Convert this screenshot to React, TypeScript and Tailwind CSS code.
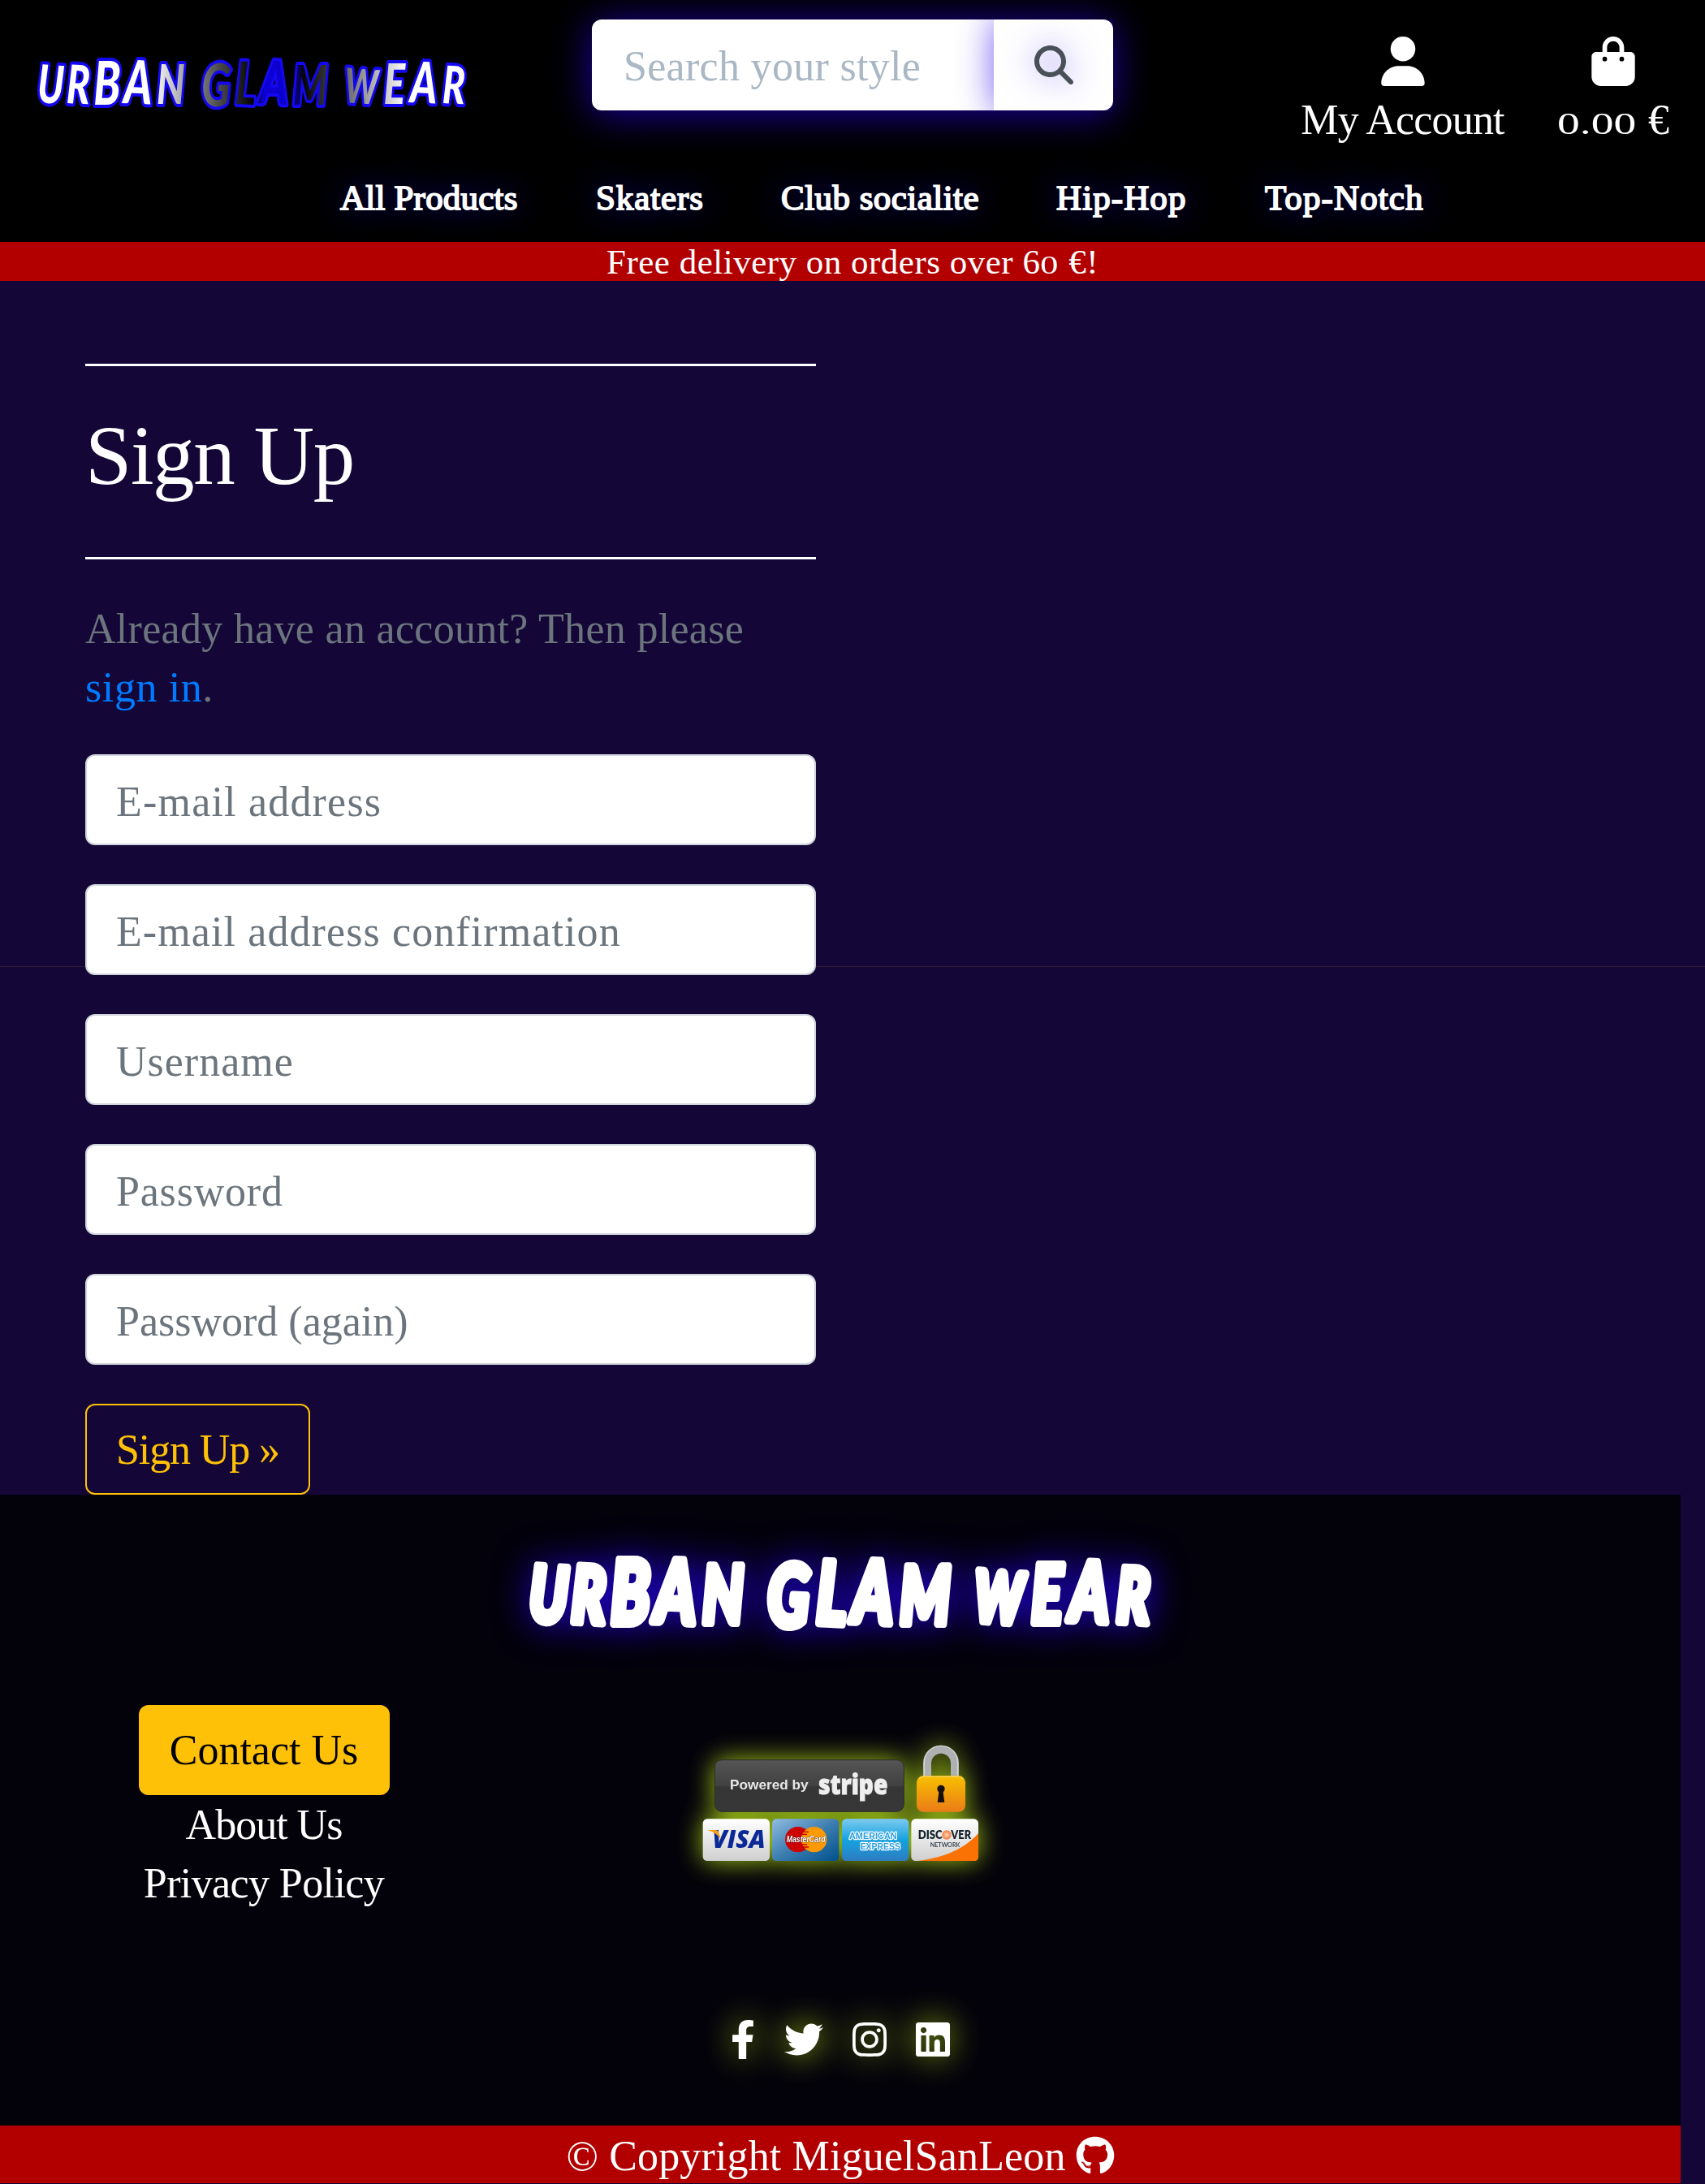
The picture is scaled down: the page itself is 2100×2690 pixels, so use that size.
import React from "react";
import { FaUser, FaBagShopping, FaMagnifyingGlass } from "react-icons/fa6";
import { FaFacebookF, FaTwitter, FaInstagram, FaLinkedin, FaGithub } from "react-icons/fa";

const NAV = [
  { label: "All Products", cls: "w-[219px] tracking-[0.2px]" },
  { label: "Skaters", cls: "w-[132px] tracking-[0.9px]" },
  { label: "Club socialite", cls: "w-[243px] tracking-[0.45px]" },
  { label: "Hip-Hop", cls: "w-[161px] tracking-[1.1px]" },
  { label: "Top-Notch", cls: "w-[196px] tracking-[1.1px]" },
];

const FIELDS = [
  { label: "E-mail address", cls: "tracking-[1.2px]" },
  { label: "E-mail address confirmation", cls: "tracking-[1.1px]" },
  { label: "Username", cls: "tracking-[1px]" },
  { label: "Password", cls: "tracking-[0.8px]" },
  { label: "Password (again)", cls: "tracking-[0px]" },
];

// Each glyph: character, left edge, baseline, size and tilt.
const GLYPHS: [string, number, number, number, number][] = [
  ["U", 2, 56, 65, 3],
  ["R", 52, 57, 66, 2],
  ["B", 99, 59, 75, 0],
  ["A", 150, 57, 74, 2],
  ["N", 207, 58, 67, 0],
  [" ", 262, 57, 20, 0],
  ["G", 283, 60, 73, 2],
  ["L", 341, 58, 73, 2],
  ["A", 383, 57, 73, 2],
  ["M", 440, 59, 67, 0],
  [" ", 508, 57, 20, 0],
  ["W", 527, 56, 59, 3],
  ["E", 595, 58, 69, 0],
  ["A", 640, 56, 70, 2],
  ["R", 695, 57, 64, 2],
];

function Wordmark({ className, outlined }: { className: string; outlined?: boolean }) {
  return (
    <svg viewBox="0 0 533 67" className={className} preserveAspectRatio="none">
      <defs>
        <linearGradient id="chrome" gradientUnits="userSpaceOnUse" x1="0" y1="0" x2="740" y2="0">
          <stop offset="0.27" stopColor="#ffffff" />
          <stop offset="0.34" stopColor="#a8a8a8" />
          <stop offset="0.43" stopColor="#444444" />
          <stop offset="0.5" stopColor="#050505" />
          <stop offset="0.53" stopColor="#0c00d8" />
          <stop offset="0.59" stopColor="#0c00c8" />
          <stop offset="0.62" stopColor="#050505" />
          <stop offset="0.69" stopColor="#444444" />
          <stop offset="0.76" stopColor="#9a9a9a" />
          <stop offset="0.86" stopColor="#ffffff" />
        </linearGradient>
      </defs>
      <text
        transform="scale(0.72 1)"
        fontFamily="Lato, sans-serif"
        fontWeight="900"
        fontStyle="italic"
        fill={outlined ? "url(#chrome)" : "#ffffff"}
        stroke={outlined ? "#1408f0" : "#ffffff"}
        strokeWidth={outlined ? 8 : 7}
        strokeLinejoin="round"
        paintOrder="stroke"
      >
        {GLYPHS.map(([ch, x, y, size, tilt], i) => (
          <tspan key={i} x={x} y={y} fontSize={size} rotate={tilt}>
            {ch}
          </tspan>
        ))}
      </text>
    </svg>
  );
}

function PaymentBadge() {
  return (
    <svg viewBox="0 0 1170 600" className="h-[200px] w-[390px] overflow-visible [filter:drop-shadow(0_0_16px_#a4c916)]">
      <defs>
        <linearGradient id="plate" x1="0" y1="0" x2="0" y2="1">
          <stop offset="0" stopColor="#555" />
          <stop offset="0.5" stopColor="#414141" />
          <stop offset="0.52" stopColor="#353535" />
          <stop offset="1" stopColor="#373737" />
        </linearGradient>
        <linearGradient id="card" x1="0" y1="0" x2="0" y2="1">
          <stop offset="0" stopColor="#fff" />
          <stop offset="1" stopColor="#cfcfcf" />
        </linearGradient>
        <linearGradient id="mc" x1="0" y1="0" x2="1" y2="1">
          <stop offset="0" stopColor="#90bce0" />
          <stop offset="0.5" stopColor="#3d7eb0" />
          <stop offset="1" stopColor="#00508c" />
        </linearGradient>
        <linearGradient id="amex" x1="0" y1="0" x2="0" y2="1">
          <stop offset="0" stopColor="#7dcaf0" />
          <stop offset="0.5" stopColor="#15a2e0" />
          <stop offset="1" stopColor="#2d7cc0" />
        </linearGradient>
        <linearGradient id="lock" x1="0" y1="0" x2="0" y2="1">
          <stop offset="0" stopColor="#f8c000" />
          <stop offset="1" stopColor="#ea7c18" />
        </linearGradient>
        <radialGradient id="orb">
          <stop offset="0" stopColor="#ffd9bd" />
          <stop offset="1" stopColor="#f47a3c" />
        </radialGradient>
      </defs>
      <rect x="121" y="143" width="699" height="191" rx="26" fill="url(#plate)" stroke="#2e2e2e" strokeWidth="3" />
      <text x="177" y="253" textLength="290" lengthAdjust="spacingAndGlyphs" fontFamily="Liberation Sans, sans-serif" fontWeight="700" fontSize="50" fill="#e8e8e8">Powered by</text>
      <text x="504" y="270" textLength="256" lengthAdjust="spacingAndGlyphs" fontFamily="Open Sans, sans-serif" fontWeight="800" fontSize="100" fill="#efefef" stroke="#efefef" strokeWidth="3">stripe</text>
      <path d="M906 210V155a51 51 0 0 1 102 0v55" fill="none" stroke="#aeb0b2" strokeWidth="30" />
      <path d="M895 205V153a62 62 0 0 1 124 0v52" fill="none" stroke="#d4d5d6" strokeWidth="4" />
      <rect x="867" y="202" width="180" height="133" rx="24" fill="url(#lock)" />
      <path d="M876 214q5-9 17-9h128q12 0 17 9" fill="none" stroke="#ffdf70" strokeWidth="3" />
      <circle cx="957" cy="250" r="14" fill="#15100c" />
      <path d="M950 255h14l6 45h-26z" fill="#15100c" />
      <rect x="77" y="361" width="247" height="155" rx="16" fill="url(#card)" />
      <rect x="333" y="361" width="247" height="155" rx="16" fill="url(#mc)" />
      <rect x="591" y="361" width="247" height="155" rx="16" fill="url(#amex)" />
      <rect x="847" y="361" width="248" height="155" rx="16" fill="url(#card)" />
      <path d="M870 516C970 505 1045 470 1095 414V500q0 16-16 16z" fill="#fb7204" />
      <text x="112" y="467" textLength="196" lengthAdjust="spacingAndGlyphs" fontFamily="Open Sans, sans-serif" fontWeight="800" fontStyle="italic" fontSize="88" fill="#0a2896">VISA</text>
      <path d="M93 402h30q10 0 13 10l8 24q-18-26-51-34z" fill="#f5a01c" />
      <circle cx="428" cy="437" r="47" fill="#cc0000" />
      <circle cx="488" cy="437" r="47" fill="#ff9900" />
      <path d="M444 409h24M442 418h20M442 456h20M444 465h24" stroke="#cc0000" strokeWidth="4" />
      <text x="386" y="448" textLength="144" lengthAdjust="spacingAndGlyphs" fontFamily="Liberation Sans, sans-serif" fontWeight="700" fontStyle="italic" fontSize="33" fill="#fff" stroke="#223" strokeWidth="2" paintOrder="stroke">MasterCard</text>
      <g fontFamily="Liberation Sans, sans-serif" fontWeight="700" fontSize="34" fill="#2b9fe0" stroke="#fff" strokeWidth="7" strokeLinejoin="round" paintOrder="stroke">
        <text x="618" y="435" textLength="176" lengthAdjust="spacingAndGlyphs">AMERICAN</text>
        <text x="659" y="473" textLength="148" lengthAdjust="spacingAndGlyphs">EXPRESS</text>
      </g>
      <text x="872" y="436" textLength="90" lengthAdjust="spacingAndGlyphs" fontFamily="Lato, sans-serif" fontWeight="800" fontSize="46" fill="#16222c">DISC</text>
      <circle cx="978" cy="420" r="17" fill="url(#orb)" />
      <text x="994" y="436" textLength="74" lengthAdjust="spacingAndGlyphs" fontFamily="Lato, sans-serif" fontWeight="800" fontSize="46" fill="#16222c">VER</text>
      <text x="917" y="465" textLength="110" lengthAdjust="spacingAndGlyphs" fontFamily="Lato, sans-serif" fontWeight="500" fontSize="25" fill="#16222c">NETWORK</text>
    </svg>
  );
}

function Header() {
  return (
    <header className="h-[298px] overflow-hidden bg-black">
      <div className="flex h-[184px] items-start">
        <Wordmark outlined className="mt-[70px] ml-[44px] h-[67px] w-[533px] shrink-0 overflow-visible" />
        <form className="mt-6 ml-[152px] flex h-[112px] w-[642px] shrink-0 rounded-[12px] shadow-[0_4px_48px_#2600d8c0]">
          <input
            className="w-[495px] rounded-l-[12px] border-2 border-white bg-white pt-1 pl-[37px] text-[52px] tracking-[0.3px] placeholder:text-[#aab7c4] placeholder:opacity-100"
            placeholder="Search your style"
          />
          <button type="button" className="flex flex-1 items-center justify-center rounded-r-[12px] border-2 border-white bg-white text-[#495057] shadow-[0_0_44px_#2600e8a0] [clip-path:inset(0_0_0_-60px)]">
            <FaMagnifyingGlass className="size-12 [filter:drop-shadow(0_0_20px_#2600e890)]" />
          </button>
        </form>
        <div className="ml-[229px] flex w-[255px] shrink-0 flex-col items-center pt-[45px] text-white">
          <FaUser className="h-[61px] w-[54px]" />
          <span className="mt-[6px] text-[52px] leading-[72px] tracking-[-0.8px] whitespace-nowrap">My Account</span>
        </div>
        <div className="ml-[62px] flex w-[140px] shrink-0 flex-col items-center pt-[45px] text-white">
          <FaBagShopping className="h-[61px] w-[54px]" />
          <div className="mt-[6px] flex h-[72px] w-[138px] items-baseline justify-between text-[52px] leading-[72px]">
            <span className="w-[96px] origin-left scale-x-[1.5] text-[37px]">0.00</span>
            <span>€</span>
          </div>
        </div>
      </div>
      <nav className="mt-[30px] ml-[419px] flex gap-24">
        {NAV.map((n) => (
          <a key={n.label} className={`${n.cls} text-[43px] leading-[60px] whitespace-nowrap text-white [-webkit-text-stroke:1.8px_white] [text-shadow:0_0_40px_#2600d8]`}>
            {n.label}
          </a>
        ))}
      </nav>
    </header>
  );
}

export default function App() {
  return (
    <div className="relative isolate h-[2690px] w-[2100px] overflow-hidden bg-[#140738] [font-family:'Liberation_Serif',serif]">
      <div className="absolute top-[1190px] left-0 -z-10 h-px w-full bg-[#35193a]" />
      <Header />
      <div className="h-[48px] bg-[#b20000] text-center text-[43px] leading-[50px] tracking-[0.5px] text-white">
        Free delivery on orders over 6
        <span className="mr-[8px] inline-block origin-left scale-x-[1.45] text-[31px] leading-none tracking-normal">0</span> €!
      </div>
      <main className="w-[1005px] pt-[102px] pl-[105px]">
        <div className="h-[3px] bg-white" />
        <h1 className="mt-[53px] text-[103px] leading-[115px] tracking-[-1.4px] text-white">Sign Up</h1>
        <div className="mt-[67px] h-[3px] bg-white" />
        <p className="mt-[50px] text-[52px] leading-[72px] tracking-[0.3px] text-[#6c757d]">
          Already have an account? Then please <a className="tracking-[0.6px] text-[#007bff]">sign in</a>.
        </p>
        <form className="mt-[46px] flex flex-col items-start gap-12">
          {FIELDS.map((f) => (
            <input
              key={f.label}
              placeholder={f.label}
              className={`${f.cls} h-[112px] w-[900px] rounded-[12px] border-2 border-[#ced4da] bg-white pt-1 pl-[36px] text-[52px] placeholder:text-[#6c757d] placeholder:opacity-100`}
            />
          ))}
          <button type="button" className="h-[112px] w-[277px] rounded-[12px] border-2 border-[#ffc107] pt-[2px] text-[52px] tracking-[-1.1px] text-[#ffc107]">
            Sign Up »
          </button>
        </form>
      </main>
      <footer className="w-[2070px]">
        <div className="flex h-[777px] flex-col items-center bg-[#03010a] pt-[74px]">
          <Wordmark className="h-[97px] w-[773px] overflow-visible [filter:drop-shadow(0_0_22px_#2600ffd0)]" />
          <div className="mt-[88px] grid h-[330px] w-full grid-cols-[650px_770px_650px]">
            <div className="flex flex-col items-center text-[52px] leading-[72px]">
              <a className="h-[111px] w-[309px] rounded-[12px] bg-[#ffc107] pt-[20px] text-center text-black">Contact Us</a>
              <a className="mt-[1px] tracking-[-1px] text-white">About Us</a>
              <a className="tracking-[-0.6px] text-white">Privacy Policy</a>
            </div>
            <div className="flex justify-center pt-5">
              <PaymentBadge />
            </div>
          </div>
          <div className="mt-[58px] flex items-center gap-9 text-white [filter:drop-shadow(0_0_20px_#a4c916)]">
            <FaFacebookF className="h-12 w-[30px]" />
            <FaTwitter className="size-12" />
            <FaInstagram className="h-12 w-[42px]" />
            <FaLinkedin className="h-12 w-[42px]" />
          </div>
        </div>
        <div className="flex h-[71px] items-center justify-center gap-3 bg-[#b20000] text-[52px] leading-[72px] tracking-[0.15px] text-white">
          <span className="pt-[5px]">© Copyright MiguelSanLeon</span>
          <FaGithub className="mt-[2px] size-12" />
        </div>
      </footer>
    </div>
  );
}
